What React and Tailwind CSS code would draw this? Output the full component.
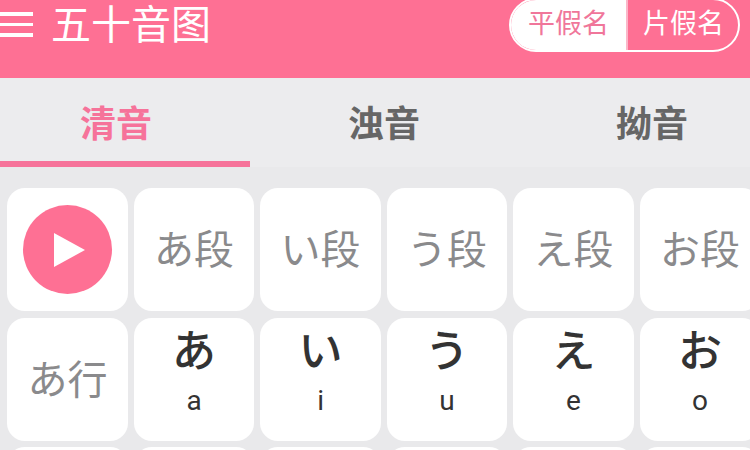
const kanaRow = [["あ", "a"], ["い", "i"], ["う", "u"], ["え", "e"], ["お", "o"]];
const heads = ["あ段", "い段", "う段", "え段", "お段"];

function Cell({ children }) {
  return (
    <div className="flex h-[123px] w-[120.5px] shrink-0 flex-col items-center rounded-[18px] bg-white">
      {children}
    </div>
  );
}

function Label({ text }) {
  return (
    <Cell>
      <span className="mt-[34px] text-[40px] leading-[50px] text-[#8a8a8c]">{text}</span>
    </Cell>
  );
}

export default function App() {
  return (
    <div
      className="h-[450px] w-[750px] overflow-hidden bg-[#e9e9eb]"
      style={{ fontFamily: '"Noto Sans CJK SC", "Noto Sans", sans-serif' }}
    >
      {/* HEADER */}
      <header className="flex h-[78px] items-start justify-between bg-[#fe7094]">
        <div className="flex items-start">
          <div className="mt-[12px] flex w-[33px] flex-col gap-[7px]">
            <div className="h-[3.5px] bg-white" />
            <div className="h-[3.5px] bg-white" />
            <div className="h-[3.5px] bg-white" />
          </div>
          <h1 className="ml-[18px] mt-[1px] text-[40px] leading-[42px] font-normal text-white">五十音图</h1>
        </div>
        <div className="mr-[10px] mt-[-2px] flex h-[54px] w-[231px] overflow-hidden rounded-full border-2 border-white text-[27px]">
          <div className="flex w-[115px] items-center justify-center bg-white pb-[5px] text-[#f0769a]">平假名</div>
          <div className="flex flex-1 items-center justify-center border-l-2 border-[#fbb7c9] pb-[5px] pl-[1px] text-white">片假名</div>
        </div>
      </header>

      {/* TABS */}
      <nav className="grid h-[89px] grid-cols-3 bg-[#ececee] text-[36px] font-bold text-[#666666]">
        <div className="flex flex-col items-center border-b-[6px] border-[#f6739a] pt-[13px] text-[#f6739a]">
          <span className="mr-[18px] leading-[60px]">清音</span>
        </div>
        <div className="flex justify-center pt-[13px]">
          <span className="mr-[-18px] leading-[60px]">浊音</span>
        </div>
        <div className="flex justify-center pt-[13px]">
          <span className="mr-[-54px] leading-[60px]">拗音</span>
        </div>
      </nav>

      {/* GRID */}
      <main className="flex flex-col gap-[6.5px] pl-[7.3px] pt-[21px]">
        <div className="flex gap-[6px]">
          <Cell>
            <div className="mt-[17px] flex h-[89px] w-[89px] items-center justify-center rounded-full bg-[#fe7094]">
              <svg width="31" height="34" viewBox="0 0 31 34" className="ml-[4px]">
                <polygon points="0,0 31,17 0,34" fill="#ffffff" />
              </svg>
            </div>
          </Cell>
          {heads.map((h) => (
            <Label key={h} text={h} />
          ))}
        </div>
        <div className="flex gap-[6px]">
          <Label text="あ行" />
          {kanaRow.map(([kana, romaji]) => (
            <Cell key={romaji}>
              <span className="mt-[2px] text-[44px] leading-[56px] font-medium text-[#333333]">{kana}</span>
              <span
                className="mt-[8px] text-[28px] leading-[34px] text-[#333333]"
                style={{ fontFamily: '"Roboto", sans-serif' }}
              >
                {romaji}
              </span>
            </Cell>
          ))}
        </div>
        {/* next row only peeks in at the bottom edge */}
        <div className="flex gap-[6px]">
          {[0, 1, 2, 3, 4, 5].map((i) => (
            <Cell key={i} />
          ))}
        </div>
      </main>
    </div>
  );
}
